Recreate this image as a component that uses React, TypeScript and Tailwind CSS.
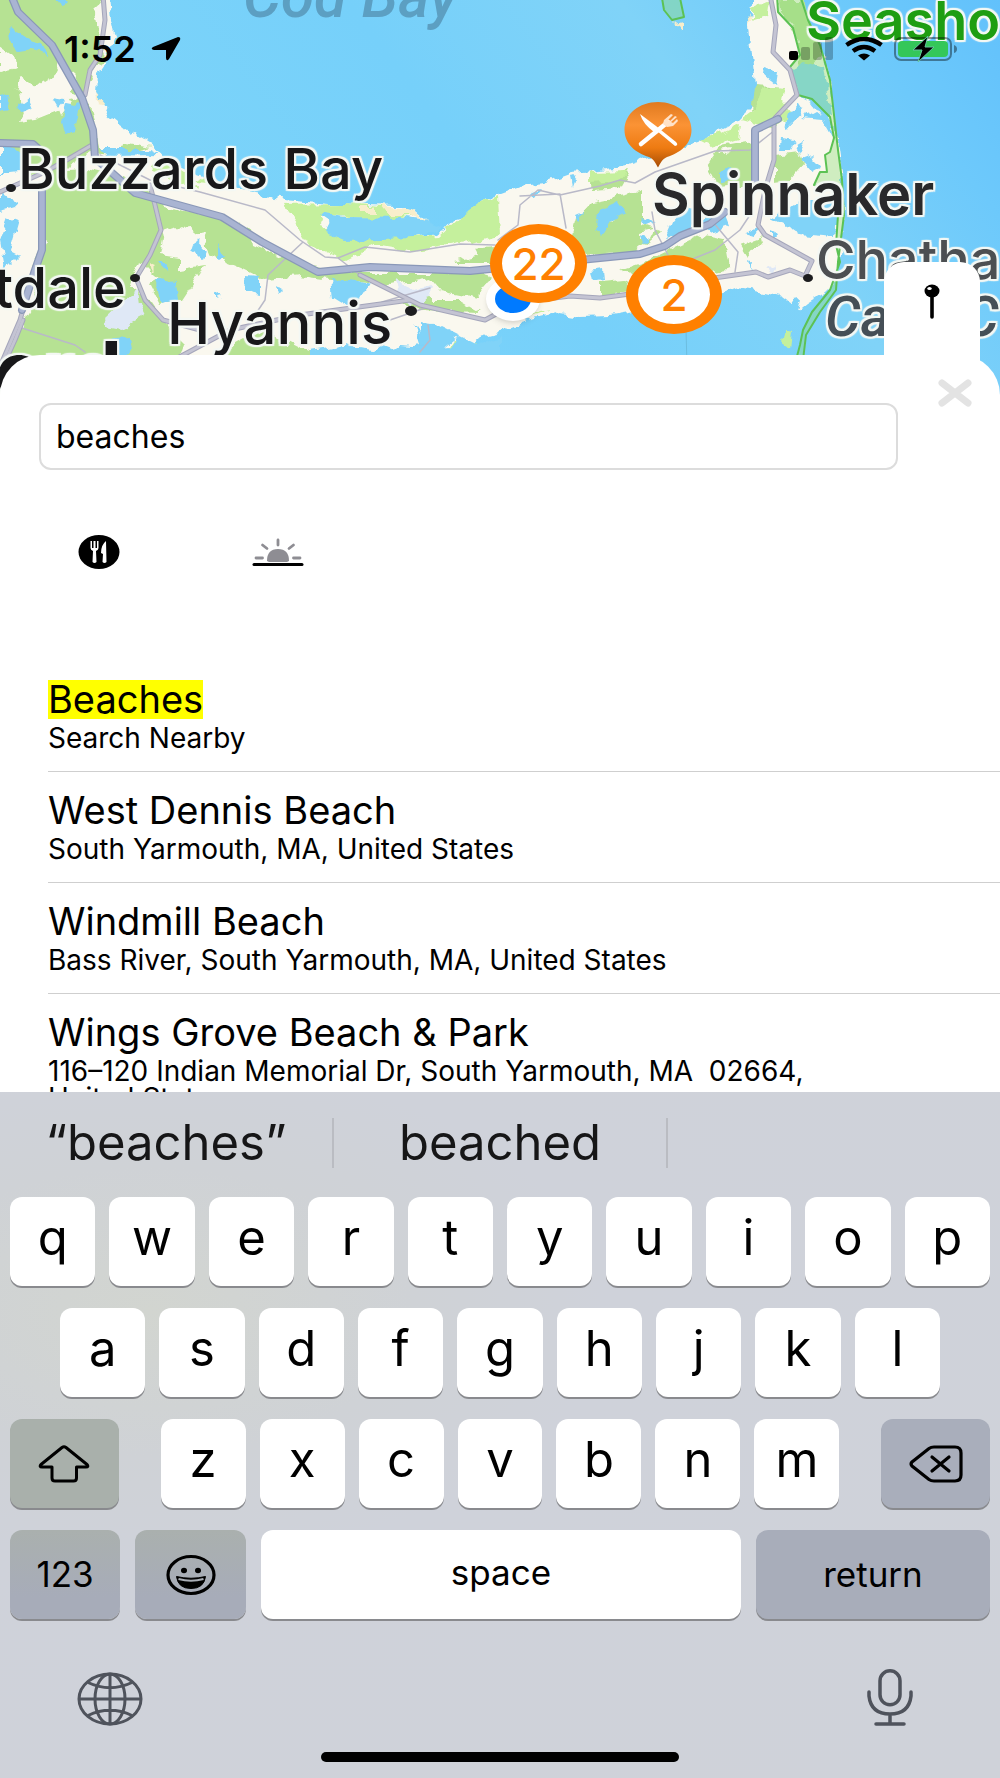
import { useState } from "react";
import type { ReactNode } from "react";

const HALO =
  "[text-shadow:2px_0_1px_#f4f8f4,-2px_0_1px_#f4f8f4,0_2px_1px_#f4f8f4,0_-2px_1px_#f4f8f4,2px_2px_1px_#f4f8f4,-2px_-2px_1px_#f4f8f4,2px_-2px_1px_#f4f8f4,-2px_2px_1px_#f4f8f4]";

function MapDrawing() {
  return (
    <svg
      className="absolute inset-x-0 top-0 h-[400px] w-full"
      viewBox="0 0 1000 400"
      preserveAspectRatio="none"
      aria-hidden="true"
    >
      <defs>
        <linearGradient id="sea" x1="0" y1="0.3" x2="1" y2="0">
          <stop offset="0" stopColor="#7ed5f9" />
          <stop offset="0.4" stopColor="#76d0fa" />
          <stop offset="0.65" stopColor="#80d3f8" />
          <stop offset="0.85" stopColor="#6dc9fb" />
          <stop offset="1" stopColor="#62c1fb" />
        </linearGradient>
        <filter id="coast" x="-5%" y="-5%" width="110%" height="110%">
          <feTurbulence type="fractalNoise" baseFrequency="0.09" numOctaves="2" seed="7" />
          <feDisplacementMap in="SourceGraphic" scale="11" xChannelSelector="R" yChannelSelector="G" />
        </filter>
      </defs>
      <rect width="1000" height="400" fill="url(#sea)" />
      <g filter="url(#coast)">
        <path
          fill="#faf8ef"
          d="M-20-20H108L111 20L115 38L106 62L97 75L96 95L108 114L128 130L153 146L165 160L190 172L228 185L245 192L285 200L330 204L400 206L415 211L426 221L405 218L385 222L360 218L335 217L316 214L330 223L326 231L345 240L382 240L402 238L432 236L446 230L455 220L470 216L481 203L498 194L520 186L545 183L572 173L596 171L626 165L655 155L697 143L718 132L738 121L756 103L755 85L752 55L749 25L752 5L760-20H798L808 20L820 45L830 80L834 115L838 150L842 180L844 215L840 255L838 280L826 292L808 303L797 312L800 300L790 302L782 296L765 292L738 287L722 293L705 296L672 304L640 310L610 315L580 316L560 313L535 319L515 325L500 331L480 336L470 345L440 348L420 334L414 325L420 345L400 352L382 345L372 350L340 346L310 356L300 420H-20Z"
        />
        <g fill="#b6e293">
          <path d="M-20-20H100L104 15L98 35L107 60L88 70L92 80L82 95L72 90L75 75L60 62L52 78L36 88L20 75L18 90L0 95L-20 90Z" />
          <path d="M0 92L20 90L22 110L35 120L60 110L72 95L88 105L96 130L98 150L122 142L152 147L120 155L90 152L62 170L32 178L0 160Z" />
          <path d="M48 170L85 168L118 175L150 190L162 205L185 212L220 217L250 230L252 245L275 255L300 265L345 274L430 274L470 270L490 275L480 298L440 290L430 278L390 285L330 280L300 276L265 280L240 268L208 255L205 240L190 228L165 230L160 255L180 258L180 275L160 280L138 262L130 285L150 300L170 330L185 345L175 375L0 375L20 330L38 300L30 270L46 240L40 200Z" />
          <path d="M150 285L175 270L205 265L182 300L160 305ZM230 348L262 330L300 350L345 360L220 358ZM450 252L495 248L490 262L455 262ZM400 300L460 300L480 312L420 310Z" />
          <path d="M590 203L625 196L642 190V225L660 232L635 252L590 255L570 240L576 218ZM720 146L752 140L755 185L718 188L706 165ZM775 155L798 152L803 165L790 180L775 182ZM600 282L622 280L640 290L600 295ZM512 270L570 262L575 276L515 278ZM645 262L700 235L725 240L730 268L650 284L620 270ZM590 178L630 170L620 188L592 190ZM755 86L785 88L775 100L752 112ZM740 245L765 236L748 258ZM779 0L804 0L812 30L822 55L812 68L798 68L800 48L792 26L780 12Z" />
        </g>
        <g fill="#c5f09d">
          <path d="M280 205L345 204L405 209L420 216L380 220L330 215L318 216L327 230L345 238L410 238L440 236L460 218L480 203L498 196L500 235L470 245L415 252L375 245L345 260L310 245L290 215Z" />
          <path d="M752 8L770 0L768 15L752 20ZM765 88L785 88L782 102L795 118L770 128L742 120L755 110ZM590 172L628 171L618 182L590 184ZM700 140L718 134L740 125L738 138L712 146ZM803 82L822 90L826 100L808 95ZM808 75L820 70L812 82Z" />
          <path d="M785 330L792 332L790 350L782 345ZM812 222L818 225L805 230ZM540 312L552 310L530 318ZM455 340L478 342L448 350ZM165 160L185 173L200 190L172 180L150 168ZM205 176L218 184L196 182Z" />
        </g>
        <g fill="#faf8ef">
          <path d="M0 45L14 55L16 68L0 72ZM20 75L30 90L42 80L48 90L42 105L35 120L20 122L25 110L40 98L28 92ZM60 70L65 82L55 95L72 100L60 115L55 102L45 105ZM95 12L108 0L106 30L98 28ZM240 190L282 200L288 212L262 208L245 202ZM250 218L275 216L290 245L270 248L252 230ZM162 230L175 225L195 235L205 233L202 245L180 245L168 250ZM180 188L170 198L155 190ZM200 188L222 188L225 200L202 195ZM0 190L25 200L35 235L28 260L36 275L20 300L0 290ZM0 165L48 180L30 195L0 188ZM100 135L130 136L120 150L98 150ZM145 265L155 275L140 282Z" />
          <path d="M640 232L655 228L650 238L640 240ZM605 215L615 220L600 226ZM515 210L530 208L528 228L512 225ZM720 150L732 148L728 156ZM430 248L470 240L478 255L450 262ZM385 250L425 252L430 264L390 262Z" />
        </g>
        <g fill="#80d3f8">
          <path d="M8 25L22 36L40 45L48 55L30 50L18 52L10 40ZM55 0L68 0L60 8ZM0 95L10 92L8 110L0 112ZM18 105L28 98L32 108L20 114ZM65 102L80 105L75 130L66 135L62 120ZM52 98L65 100L58 108ZM0 145L18 150L30 158L28 172L0 175ZM100 150L150 150L160 155L105 156ZM8 218L18 222L10 250L20 255L5 270L0 240ZM0 195L18 200L14 208L0 212Z" />
          <path d="M156 280L176 282L178 300L162 305ZM158 262L168 262L166 272ZM196 240L205 250L202 258L192 252ZM218 245L225 258L218 262ZM245 275L260 276L260 295L246 292ZM276 285L284 290L278 296ZM215 293L222 298L215 300ZM330 278L350 280L370 285L362 298L345 306L332 298ZM105 340L130 338L132 352L115 358ZM318 213L345 217L400 218L424 220L445 228L415 238L345 240L326 232L330 224Z" />
          <path d="M765 68L778 72L776 85L764 75ZM790 70L805 62L824 68L832 115L825 120L812 102L800 96L795 80ZM788 115L798 102L803 110L785 130ZM782 138L795 140L790 150L780 150ZM795 145L805 142L800 155ZM800 118L815 110L830 122L833 140L822 120ZM800 160L812 155L822 165L810 172ZM532 192L542 190L536 198ZM570 176L576 175L572 186ZM600 210L618 202L625 212L610 222L602 235L596 228ZM640 218L655 222L645 226ZM640 235L650 238L642 245ZM590 270L602 268L603 280L592 282ZM745 232L760 225L755 235ZM705 215L725 212L730 225L710 232L700 225ZM720 175L732 168L735 180L720 182ZM770 218L800 200L838 200L835 238L800 235L790 228ZM770 230L778 234L770 238ZM748 260L752 262L750 270ZM575 215L582 212L578 222ZM680 205L700 210L690 230L665 240Z" />
          <path d="M420 322L440 325L460 335L440 352L420 345ZM310 352L345 346L380 352L400 345L470 350L500 336V400H300ZM460 335L480 345L470 355L450 350Z" />
        </g>
        <g fill="#f8eecb">
          <path d="M361 207H374V212H361ZM380 206L412 209L425 221L410 216L388 216ZM96 95L105 106L98 104ZM748 14L752 20L750 26ZM148 262L155 265L150 270ZM674 24L682 22L682 30Z" />
        </g>
        <g fill="#dfe8f6">
          <path d="M105 318L122 302L138 290L140 305L145 315L120 328L106 325ZM396 280L412 290L432 286L428 300L412 305L400 292ZM766 268L776 264L772 272Z" />
        </g>
      </g>

      <g fill="#8fdc7a" fillOpacity="0.4" stroke="#5cc254" strokeWidth="2" strokeLinejoin="round">
        <path d="M777-5L778 12L793 28L800 55L790 67L793 80L798 95L812 99L830 117L834 138L830 152L825 155L827 172L820 172L814 185L836 190L838 215L836 245L840 262L830 290L812 312L803 330L800 345L796 360H803L806 335L820 312L836 290L838 262L844 215L842 180L838 150L834 115L830 80L820 45L808 20L800-5Z" />
        <path d="M662-2L664 10L672 20L684 17L680-2Z" />
      </g>
      <path d="M686 330L688 400" stroke="#6cbde0" strokeWidth="1" />

      <g fill="none" strokeLinejoin="round" strokeLinecap="round">
        <g stroke="#b9b9c8" strokeWidth="1.5">
          <path d="M100 155L150 180L200 192L265 210L300 240L325 257L338 258L365 247L410 252L460 244L495 245M303 242L268 275L265 300L255 315M338 258L360 275M22 328L75 345L85 352M498 240L518 225L520 205L538 190L560 195L600 186L620 180L635 183L655 172M520 196L560 194L566 228M655 172L715 151L750 150L775 130M652 212L655 230L668 255M713 222L738 252L735 272M750 215L740 230L715 250L690 260" />
          <path d="M382 302L430 288M390 320L425 308M428 325L430 340L420 352" />
        </g>
        <g stroke="#a5a6bb" strokeWidth="5">
          <path d="M103-5L105 20L100 55L90 70L85 95M150 185L155 205L161 230L150 255L136 278L145 300L163 320L200 330M360 275L420 305L485 320L500 312M170 362L230 330L300 315L410 300M92 145L70 158L45 172L0 192M23 320L15 340L5 362" />
          <path d="M770-5L776 25L773 52L790 70L797 95L775 118M774 125V160L765 190L758 225L765 235L812 261L805 276L790 270L768 277L756 272L700 280M500 305L570 296L600 298L630 294M36 265L20 320L2 362" />
        </g>
        <g stroke="#c4c4d3" strokeWidth="3">
          <path d="M103-5L105 20L100 55L90 70L85 95M150 185L155 205L161 230L150 255L136 278L145 300L163 320L200 330M360 275L420 305L485 320L500 312M170 362L230 330L300 315L410 300M92 145L70 158L45 172L0 192M23 320L15 340L5 362" />
          <path d="M770-5L776 25L773 52L790 70L797 95L775 118M774 125V160L765 190L758 225L765 235L812 261L805 276L790 270L768 277L756 272L700 280M500 305L570 296L600 298L630 294M36 265L20 320L2 362" />
        </g>
        <g stroke="#8a98b8" strokeWidth="8">
          <path d="M11-5L18 12L52 45L82 98L93 130L95 158L135 193L222 217L262 242L318 272L370 267L470 271L640 254L665 246L680 236L710 224L725 212M755 180V130L778 119M0 143L33 144L42 152M42 185V250L35 270L22 310" />
        </g>
        <g stroke="#a9b4d2" strokeWidth="5.5">
          <path d="M11-5L18 12L52 45L82 98L93 130L95 158L135 193L222 217L262 242L318 272L370 267L470 271L640 254L665 246L680 236L710 224L725 212M755 180V130L778 119M0 143L33 144L42 152M42 185V250L35 270L22 310" />
        </g>
      </g>
      <g fill="#1c1c1e">
        <ellipse cx="11" cy="188" rx="5" ry="4" />
        <ellipse cx="135" cy="278" rx="5" ry="4" />
        <ellipse cx="411" cy="311" rx="6" ry="5" />
        <ellipse cx="808" cy="278" rx="5" ry="4" />
      </g>
    </svg>
  );
}

function MapLabels() {
  return (
    <div className="absolute inset-x-0 top-0 h-[400px] overflow-hidden leading-none whitespace-nowrap font-medium text-[#18181a]">
      <span className="absolute left-[24.3%] -top-[33px] font-['Roboto',sans-serif] text-[60px] italic text-[#5c9fc2]">Cod Bay</span>
      <span className={`absolute left-[80.6%] -top-[6px] text-[54px] font-semibold text-[#1f9e12] ${HALO}`}>Seashor</span>
      <span className={`absolute left-[1.8%] top-[141px] text-[56px] ${HALO}`}>Buzzards Bay</span>
      <span className={`absolute right-[87.4%] top-[260px] text-[56px] ${HALO}`}>tdale</span>
      <span className={`absolute left-[16.7%] top-[294px] text-[58px] ${HALO}`}>Hyannis</span>
      <span className={`absolute right-[87.8%] top-[331px] text-[78px] font-bold ${HALO}`}>ord</span>
      <span className={`absolute left-[65.2%] top-[165px] text-[58px] font-semibold text-[#29292b] ${HALO}`}>Spinnaker</span>
      <span className={`absolute left-[81.6%] top-[233px] text-[54px] text-[#4c4f52] ${HALO}`}>Chatham</span>
      <span className={`absolute left-[82.5%] top-[289px] font-['Roboto',sans-serif] text-[56px] italic text-[#454f57] ${HALO}`}>Cape C</span>
    </div>
  );
}

function MapPins() {
  return (
    <>
      <span className="absolute left-[48.6%] top-[277px] flex h-[44px] w-[54px] items-center justify-center rounded-[50%] bg-white shadow-md">
        <span className="h-[28px] w-[36px] rounded-[50%] bg-[#007aff]" />
      </span>
      <button className="absolute left-[49%] top-[224px] flex h-[79px] w-[97px] items-center justify-center rounded-[50%] border-x-[12px] border-y-[10px] border-[#ff8000] bg-white text-[44px] font-medium text-[#ff8000]">
        22
      </button>
      <button className="absolute left-[62.6%] top-[255px] flex h-[79px] w-[96px] items-center justify-center rounded-[50%] border-x-[12px] border-y-[10px] border-[#ff8000] bg-white text-[44px] font-medium text-[#ff8000]">
        2
      </button>
      <button aria-label="Spinnaker restaurant" className="absolute left-[62.4%] top-[102px]">
        <svg width="68" height="66" viewBox="0 0 68 66">
          <defs>
            <linearGradient id="pin" x1="0" y1="0" x2="0" y2="1">
              <stop offset="0" stopColor="#e07a20" />
              <stop offset="0.35" stopColor="#fb9335" />
              <stop offset="0.7" stopColor="#ee7b12" />
              <stop offset="1" stopColor="#a64d05" />
            </linearGradient>
          </defs>
          <path d="M34 0C53 0 67.500 12 67.500 28C67.500 42 56 51 43 55C38 57 36 62 34 65.500C32 62 30 57 25 55C12 51 .5 42 .5 28C.5 12 15 0 34 0Z" fill="url(#pin)" />
          <path d="M17 42L44 20" stroke="#fff" strokeWidth="4.500" strokeLinecap="round" />
          <path d="M40 18L47 12L49 13L44 18L46 19L51 14L53 15L47 20L49 21L53 17L54 19L49 24L43 25L39 22Z" fill="#ffe2c8" />
          <path d="M16 12L32 24L52 40Q55 43 51 44L33 29L30 30Q19 22 16 12Z" fill="#fff" />
        </svg>
      </button>
    </>
  );
}

function StatusBar() {
  return (
    <div className="relative flex items-center justify-between pl-[64px] pr-[42px] pt-[29px] text-black">
      <div className="flex items-center gap-[14px]">
        <span className="text-[36px] leading-[40px] font-semibold">1:52</span>
        <svg width="32" height="26" viewBox="0 0 32 26" aria-hidden="true">
          <path d="M28 1Q31 1 30 4L19 23Q16.500 26 16 22V14H4Q0 13 3 11Z" fill="#000" />
        </svg>
      </div>
      <div className="flex items-center gap-[11px]">
        <svg width="46" height="24" viewBox="0 0 46 24" aria-label="Signal">
          <rect x="1" y="14" width="9" height="9" rx="2" fill="#000" />
          <rect x="13" y="10" width="9" height="13" rx="2" fill="#000" opacity=".28" />
          <rect x="25" y="5" width="9" height="18" rx="2" fill="#000" opacity=".25" />
          <rect x="37" y="0" width="8" height="23" rx="2" fill="#000" opacity=".25" />
        </svg>
        <svg width="38" height="24" viewBox="0 0 38 24" aria-label="Wi-Fi">
          <g fill="none" stroke="#000" strokeWidth="4.500">
            <path d="M1.500 8Q19-4 36.500 8" />
            <path d="M8 14Q19 6 30 14" />
          </g>
          <path d="M13 18.500Q19 14.500 25 18.500L19 23.500Z" fill="#000" />
        </svg>
        <svg width="64" height="26" viewBox="0 0 64 26" aria-label="Battery charging">
          <rect x="1" y="2" width="56" height="22" rx="6" fill="none" stroke="#000" strokeOpacity=".4" strokeWidth="2" />
          <rect x="4" y="5" width="50" height="16" rx="4" fill="#34c759" />
          <path d="M60 9Q63 10 63 13Q63 16 60 17Z" fill="#000" fillOpacity=".4" />
          <path d="M34 0L19 14H28L24 26L40 11H31Z" fill="#000" stroke="#64c4a0" strokeWidth="1" />
        </svg>
      </div>
    </div>
  );
}

const PLACES = [
  { title: "Beaches", detail: "Search Nearby", marked: true },
  { title: "West Dennis Beach", detail: "South Yarmouth, MA, United States" },
  { title: "Windmill Beach", detail: "Bass River, South Yarmouth, MA, United States" },
  {
    title: "Wings Grove Beach & Park",
    detail: "116–120 Indian Memorial Dr, South Yarmouth, MA \u00a002664, United States",
  },
];

function SearchSheet() {
  const [query, setQuery] = useState("beaches");
  return (
    <main className="relative flex min-h-0 flex-1 flex-col rounded-t-[40px] bg-white">
      <button aria-label="Close" className="absolute right-[26px] top-[19px] flex h-[38px] w-[38px] items-center justify-center">
        <svg width="36" height="30" viewBox="0 0 36 30">
          <path d="M5 5L31 25M31 5L5 25" stroke="#e3e3e3" strokeWidth="7" strokeLinecap="round" />
        </svg>
      </button>
      <div className="pl-[39px] pr-[102px] pt-[48px]">
        <input
          aria-label="Search places"
          value={query}
          onChange={(e) => setQuery(e.target.value)}
          className="h-[67px] w-full rounded-xl border-2 border-[#dcdcdc] bg-white px-[15px] text-[32px] text-black outline-none"
        />
      </div>
      <div className="flex items-center gap-[132px] pl-[78px] pt-[61px]">
        <button aria-label="Restaurants">
          <svg width="42" height="42" viewBox="0 0 42 42">
            <ellipse cx="21" cy="21" rx="20.500" ry="17" fill="#000" />
            <path d="M12.500 10V17Q12.500 19 15 20L14.500 31Q16.500 33 18.500 31L18 20Q20.500 19 20.500 17V10H19V17H17.500V10H15.500V17H14V10Z" fill="#fff" />
            <path d="M28 10Q23 14 23 22L25 23L24.500 31Q26.500 33 28.500 31Z" fill="#fff" />
          </svg>
        </button>
        <button aria-label="Beaches and sunrise spots">
          <svg width="52" height="42" viewBox="0 0 52 42">
            <path d="M15 30Q15 18 26 18Q37 18 37 30L35 31H17Z" fill="#8e8d93" />
            <path d="M26 9V14M10.500 14L15 17.500M41.500 14L37 17.500M4 27H10.500M41.500 27H48" stroke="#8e8d93" strokeWidth="2.800" strokeLinecap="round" />
            <path d="M2 33.500H50" stroke="#000" strokeWidth="3" strokeLinecap="round" />
          </svg>
        </button>
      </div>
      <ul className="mt-[88px] min-h-0 flex-1 overflow-y-auto pl-[48px] [scrollbar-width:none]">
        {PLACES.map((place) => (
          <li key={place.title} className="border-b border-[#cfcfcf] pt-[19px] pb-[19px] text-black">
            <h2 className="text-[38px] leading-[39px]">
              {place.marked ? <mark className="inline-block bg-[#ffff00] text-black">{place.title}</mark> : place.title}
            </h2>
            <p className="mt-[6px] max-w-[820px] text-[28px] leading-[27px]">{place.detail}</p>
          </li>
        ))}
      </ul>
    </main>
  );
}

type KeyProps = { children: ReactNode; label?: string; className?: string };

function Key({ children, label, className = "bg-white text-[49px] pb-[8px]" }: KeyProps) {
  return (
    <button
      aria-label={label}
      className={`flex h-[89px] flex-1 items-center justify-center rounded-[12px] leading-none text-black shadow-[0_2px_0_#898a8e] ${className}`}
    >
      {children}
    </button>
  );
}

function LetterRow({ letters, className }: { letters: string; className?: string }) {
  return (
    <div className={`grid grid-flow-col auto-cols-fr gap-[14px] ${className ?? ""}`}>
      {letters.split("").map((letter) => (
        <Key key={letter}>{letter}</Key>
      ))}
    </div>
  );
}

function Keyboard() {
  return (
    <section
      aria-label="Keyboard"
      className="relative shrink-0 bg-[#cfd2d9] bg-[radial-gradient(ellipse_at_15%_32%,#d2d5d0_0%,#cfd2d6_22%,#cfd2da_38%,#cfd2d9_100%)] px-[10px] pb-[16px]"
    >
      <div className="-mx-[10px] flex h-[105px] items-center pb-[4px] text-[49px] text-[#161617]">
        <button className="flex h-[50px] flex-1 items-center justify-center border-r-2 border-[#babcc2] leading-none">“beaches”</button>
        <button className="flex h-[50px] flex-1 items-center justify-center border-r-2 border-[#babcc2] leading-none">beached</button>
        <span className="flex-1" />
      </div>
      <div className="flex flex-col gap-[22px]">
        <LetterRow letters="qwertyuiop" />
        <LetterRow letters="asdfghjkl" className="px-[50px]" />
        <div className="grid grid-cols-[109fr_681fr_109fr] gap-x-[42px]">
          <Key label="Shift" className="bg-[#a9b0ab]">
            <svg width="52" height="38" viewBox="0 0 52 38">
              <path
                d="M24 2.500Q26 1 28 2.500L49 19.500Q51 22 48 22H38.500V33Q38.500 36 35.500 36H17Q14 36 14 33V22H4Q1 22 3 19.500Z"
                fill="none"
                stroke="#000"
                strokeWidth="3"
                strokeLinejoin="round"
              />
            </svg>
          </Key>
          <LetterRow letters="zxcvbnm" />
          <Key label="Delete" className="bg-[#a9aebb]">
            <svg width="54" height="38" viewBox="0 0 54 38">
              <path
                d="M20 3.500Q22 2 25 2H46Q52 2 52 8V30Q52 36 46 36H25Q22 36 20 34.500L3 21Q1 19 3 17Z"
                fill="none"
                stroke="#000"
                strokeWidth="3.200"
              />
              <path d="M23 12L40 26M40 12L23 26" stroke="#000" strokeWidth="3.200" strokeLinecap="round" />
            </svg>
          </Key>
        </div>
        <div className="grid grid-cols-[110fr_111fr_480fr_234fr] gap-[15px]">
          <Key className="bg-[linear-gradient(#aab0ae,#a7acb9_75%)] text-[35px]">123</Key>
          <Key label="Emoji" className="bg-[linear-gradient(#aab0ae,#a7acb9_75%)]">
            <svg width="50" height="42" viewBox="0 0 50 42">
              <ellipse cx="25" cy="21" rx="23" ry="18.500" fill="none" stroke="#000" strokeWidth="3.200" />
              <ellipse cx="18" cy="16.500" rx="3" ry="2.700" />
              <ellipse cx="32" cy="16.500" rx="3" ry="2.700" />
              <path d="M10.500 22.500Q25 26 39.500 22.500Q38 34.500 25 34.500Q12 34.500 10.500 22.500Z" fill="#000" stroke="#000" strokeWidth="1" />
              <path d="M12.500 25Q25 28.500 37.500 25" fill="none" stroke="#a9aeb6" strokeWidth="2" />
            </svg>
          </Key>
          <Key className="bg-white pb-[4px] text-[35px]">space</Key>
          <Key className="bg-[#a8adba] text-[35px]">return</Key>
        </div>
      </div>
      <div className="flex items-center justify-between pl-[67px] pr-[77px] pt-[50px]">
        <button aria-label="Next keyboard">
          <svg className="block" width="66" height="60" viewBox="0 0 66 60">
            <g fill="none" stroke="#4f535c" strokeWidth="3">
              <ellipse cx="33" cy="30" rx="31" ry="25" />
              <ellipse cx="33" cy="30" rx="15" ry="25" />
              <path d="M33 5V55M2 30H64M11 13.500Q33 24 55 13.500M11 46.500Q33 36 55 46.500" />
            </g>
          </svg>
        </button>
        <button aria-label="Dictate">
          <svg className="block" width="46" height="60" viewBox="0 0 46 60">
            <g fill="none" stroke="#4f535c" strokeWidth="3.500" strokeLinecap="round">
              <rect x="13" y="1.800" width="20" height="34" rx="10" />
              <path d="M2 23V27Q4 45 23 45Q42 45 44 27V23M23 45V55M9 55H37" />
            </g>
          </svg>
        </button>
      </div>
      <div className="mx-auto mt-[23px] h-[10px] w-[358px] rounded-full bg-black" />
    </section>
  );
}

export default function App() {
  return (
    <div className="flex h-screen flex-col overflow-hidden bg-white font-['Inter',sans-serif]">
      <header className="relative h-[355px] shrink-0">
        <MapDrawing />
        <MapLabels />
        <MapPins />
        <StatusBar />
        <button aria-label="Drop a pin" className="absolute right-[20px] top-[262px] flex h-[120px] w-[96px] justify-center rounded-t-[20px] bg-white pt-[22px]">
          <svg width="16" height="36" viewBox="0 0 16 36">
            <path d="M8 10V33" stroke="#000" strokeWidth="3.600" strokeLinecap="round" />
            <ellipse cx="8" cy="7" rx="7.500" ry="6.500" />
            <ellipse cx="5.500" cy="4.500" rx="2.200" ry="1.600" fill="#fff" />
          </svg>
        </button>
      </header>
      <SearchSheet />
      <Keyboard />
    </div>
  );
}
